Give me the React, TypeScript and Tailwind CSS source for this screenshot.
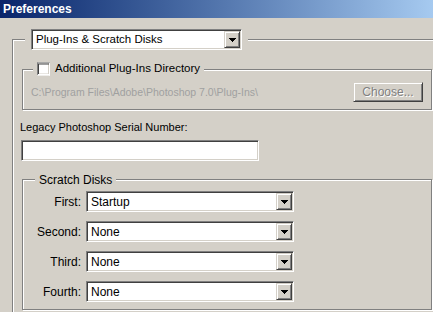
import React from 'react';

const sunken =
  'border border-t-[#808080] border-l-[#808080] border-b-white border-r-white shadow-[inset_1px_1px_0_#404040,inset_-1px_-1px_0_#d4d0c8]';
const raised =
  'border border-t-[#d4d0c8] border-l-[#d4d0c8] border-b-[#404040] border-r-[#404040] shadow-[inset_1px_1px_0_#fff,inset_-1px_-1px_0_#808080] bg-[#d4d0c8]';
const etched = 'border border-[#808080] shadow-[inset_1px_1px_0_#fff,1px_1px_0_#fff]';

const Arrow: React.FC = () => (
  <svg width="7" height="4" viewBox="0 0 7 4" shapeRendering="crispEdges">
    <rect x="0" y="0" width="7" height="1" fill="#000" />
    <rect x="1" y="1" width="5" height="1" fill="#000" />
    <rect x="2" y="2" width="3" height="1" fill="#000" />
    <rect x="3" y="3" width="1" height="1" fill="#000" />
  </svg>
);

interface SelectProps {
  value: string;
  width: string;
  size?: string;
}

const Select: React.FC<SelectProps> = ({ value, width, size = 'text-[12px]' }) => (
  <div className={`flex h-[21px] bg-white ${sunken} ${width}`}>
    <div className={`flex-1 flex items-center pl-[4px] text-black ${size} overflow-hidden whitespace-nowrap`}>
      {value}
    </div>
    <div className={`w-[16px] m-[1px] ml-0 flex items-center justify-center ${raised}`}>
      <Arrow />
    </div>
  </div>
);

const disks = [
  { label: 'First:', value: 'Startup' },
  { label: 'Second:', value: 'None' },
  { label: 'Third:', value: 'None' },
  { label: 'Fourth:', value: 'None' },
];

export default function App() {
  return (
    <div className="w-[433px] h-[312px] overflow-hidden bg-[#d4d0c8] font-['Liberation_Sans',Arial,sans-serif] text-black">
      <div className="h-[18px] flex items-center pl-[3px] bg-linear-to-r from-[#0a246a] to-[#a6caf0]">
        <span className="text-white font-bold text-[12px]">Preferences</span>
      </div>

      <div className={`relative ml-[12px] mt-[21px] w-[440px] h-[300px] pt-[29px] pl-[9px] ${etched}`}>
        <div className="absolute left-[12px] top-[-11px] px-[6px] bg-[#d4d0c8]">
          <Select value="Plug-Ins & Scratch Disks" width="w-[211px]" size="text-[11.5px]" />
        </div>

        <div className={`relative w-[410px] h-[41px] flex items-start justify-between pl-[8px] pr-[8px] pt-[12px] ${etched}`}>
          <div className="absolute left-[10px] top-[-1px] -translate-y-1/2 px-[4px] flex items-center gap-[5px] bg-[#d4d0c8]">
            <div className={`w-[13px] h-[13px] bg-white ${sunken}`} />
            <span className="text-[11.5px]">Additional Plug-Ins Directory</span>
          </div>
          <span className="text-[10.5px] text-[#a0a0a0] mt-[3px]">
            C:\Program Files\Adobe\Photoshop 7.0\Plug-Ins\
          </span>
          <div className={`w-[70px] h-[20px] flex items-center justify-center ${raised}`}>
            <span className="text-[12px] text-[#808080] [text-shadow:1px_1px_0_#fff]">Choose...</span>
          </div>
        </div>

        <div className="mt-[10px] ml-[-2px] text-[11px] leading-[14px]">Legacy Photoshop Serial Number:</div>
        <div className={`mt-[6px] ml-[-1px] w-[238px] h-[21px] bg-white ${sunken}`} />

        <div className={`relative mt-[18px] w-[410px] h-[131px] pt-[11px] ${etched}`}>
          <div className="absolute left-[12px] top-[-1px] -translate-y-1/2 px-[4px] bg-[#d4d0c8]">
            <span className="text-[12px]">Scratch Disks</span>
          </div>
          <div className="flex flex-col gap-[9px]">
            {disks.map((d) => (
              <div key={d.label} className="flex items-center">
                <span className="w-[58px] text-right text-[12px]">{d.label}</span>
                <div className="ml-[5px]">
                  <Select value={d.value} width="w-[208px]" />
                </div>
              </div>
            ))}
          </div>
        </div>
      </div>
    </div>
  );
}
